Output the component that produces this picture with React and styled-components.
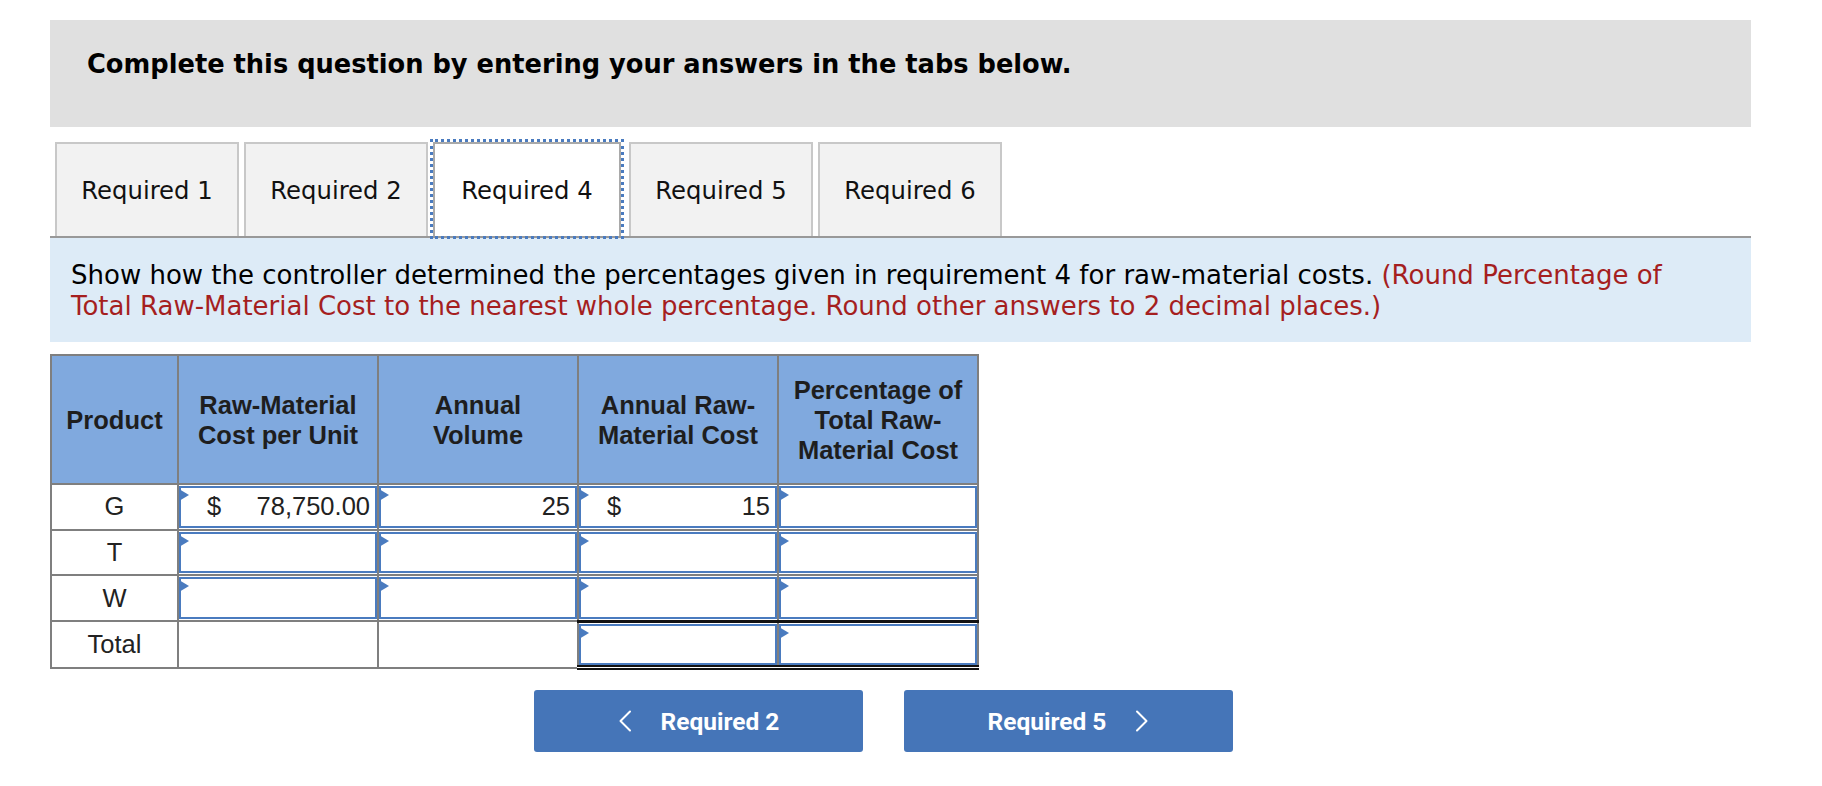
import React from "react";
import styled, { createGlobalStyle } from "styled-components";

const GlobalStyle = createGlobalStyle`
  html, body {
    margin: 0;
    padding: 0;
    background: #fff;
  }
  body {
    font-family: "DejaVu Sans", Verdana, sans-serif;
  }
`;

const Page = styled.div`
  width: 1701px;
  padding: 20px 0 0 50px;
`;

const Banner = styled.div`
  height: 107px;
  box-sizing: border-box;
  background: #e0e0e0;
  padding: 29px 0 0 37px;
  font-size: 25.7px;
  font-weight: bold;
  color: #000;
`;

const TabBar = styled.div`
  display: flex;
  gap: 5px;
  margin-top: 15px;
  padding-left: 5px;
  border-bottom: 2px solid #999;
`;

const Tab = styled.div`
  width: ${(p) => (p.$active ? 188 : 184)}px;
  height: 94px;
  box-sizing: border-box;
  display: flex;
  align-items: center;
  justify-content: center;
  background: ${(p) => (p.$active ? "#fff" : "#f2f2f2")};
  border: 2px solid ${(p) => (p.$active ? "#a9a9a9" : "#c8c8c8")};
  border-bottom: none;
  margin-right: ${(p) => (p.$active ? 3 : 0)}px;
  outline: ${(p) => (p.$active ? "3px dotted #4a7bbf" : "none")};
  font-size: 24.3px;
  color: #111;
`;

const Prompt = styled.div`
  height: 104px;
  box-sizing: border-box;
  background: #ddebf7;
  padding: 22px 60px 0 21px;
  font-size: 26px;
  line-height: 31px;
  color: #000;
`;

const Hint = styled.span`
  color: #a51f1f;
`;

const Grid = styled.table`
  border-collapse: collapse;
  table-layout: fixed;
  width: 927px;
  margin-top: 12px;
  font-family: "Liberation Sans", Arial, sans-serif;
  font-size: 25.5px;
  color: #222;
`;

const HeadCell = styled.th`
  box-sizing: border-box;
  width: ${(p) => p.$w}px;
  height: 129px;
  padding: 0 10px;
  background: #80a9de;
  border: 2px solid #7f7f7f;
  font-weight: bold;
  line-height: 30px;
  color: #1e1e1e;
`;

const Cell = styled.td`
  height: 41px;
  padding: 1px 0;
  border: 2px solid #7f7f7f;
  text-align: center;
  vertical-align: middle;
`;

const TotalCell = styled.td`
  height: 41px;
  padding: 1px 0 0;
  border: 2px solid #7f7f7f;
  border-top: 3px solid #111;
  border-bottom: 5px double #111;
  vertical-align: bottom;
`;

const Entry = styled.div`
  position: relative;
  height: 41.5px;
  box-sizing: border-box;
  border: 2px solid #4a7bbf;
  display: flex;
  align-items: center;
  justify-content: ${(p) => (p.$dollar ? "space-between" : "flex-end")};
  padding: 0 5px 0 26px;
  background: #fff;

  &::before {
    content: "";
    position: absolute;
    left: -2px;
    top: 1px;
    border-left: 10px solid #4a7bbf;
    border-top: 6px solid transparent;
    border-bottom: 6px solid transparent;
  }
`;

const NavRow = styled.div`
  display: flex;
  gap: 41px;
  margin-top: 20px;
  padding-left: 484px;
`;

const NavButton = styled.button`
  width: 329px;
  height: 62px;
  border: none;
  border-radius: 3px;
  background: #4575b8;
  color: #fff;
  font-family: Roboto, "Liberation Sans", sans-serif;
  font-weight: bold;
  font-size: 24.5px;
  display: flex;
  align-items: center;
  justify-content: center;
  gap: 29px;
  cursor: pointer;
`;

const Chevron = ({ dir }) => (
  <svg width="14" height="22" viewBox="0 0 14 22">
    <polyline
      points={dir === "left" ? "12,1.5 2.5,11 12,20.5" : "2,1.5 11.5,11 2,20.5"}
      fill="none"
      stroke="#fff"
      strokeWidth="2"
      strokeLinecap="round"
      strokeLinejoin="round"
    />
  </svg>
);

const tabs = ["Required 1", "Required 2", "Required 4", "Required 5", "Required 6"];

const columns = [
  { w: 127, label: "Product" },
  { w: 200, label: "Raw-Material Cost per Unit" },
  { w: 200, label: "Annual Volume" },
  { w: 200, label: "Annual Raw-Material Cost" },
  { w: 200, label: "Percentage of Total Raw-Material Cost" },
];

const rows = [
  { product: "G", cost: "78,750.00", volume: "25", annual: "15" },
  { product: "T" },
  { product: "W" },
];

function App() {
  return (
    <Page>
      <GlobalStyle />
      <Banner>Complete this question by entering your answers in the tabs below.</Banner>

      <TabBar>
        {tabs.map((t) => (
          <Tab key={t} $active={t === "Required 4"}>
            {t}
          </Tab>
        ))}
      </TabBar>

      <Prompt>
        Show how the controller determined the percentages given in requirement 4 for
        raw-material costs.{" "}
        <Hint>
          (Round Percentage of Total Raw-Material Cost to the nearest whole percentage. Round
          other answers to 2 decimal places.)
        </Hint>
      </Prompt>

      <Grid>
        <thead>
          <tr>
            {columns.map((c) => (
              <HeadCell key={c.label} $w={c.w}>
                {c.label}
              </HeadCell>
            ))}
          </tr>
        </thead>
        <tbody>
          {rows.map((r) => (
            <tr key={r.product}>
              <Cell>{r.product}</Cell>
              <Cell>
                <Entry $dollar={!!r.cost}>
                  {r.cost && <span>$</span>}
                  {r.cost && <span>{r.cost}</span>}
                </Entry>
              </Cell>
              <Cell>
                <Entry>{r.volume}</Entry>
              </Cell>
              <Cell>
                <Entry $dollar={!!r.annual}>
                  {r.annual && <span>$</span>}
                  {r.annual && <span>{r.annual}</span>}
                </Entry>
              </Cell>
              <Cell>
                <Entry />
              </Cell>
            </tr>
          ))}
          <tr>
            <Cell>Total</Cell>
            <Cell />
            <Cell />
            <TotalCell>
              <Entry />
            </TotalCell>
            <TotalCell>
              <Entry />
            </TotalCell>
          </tr>
        </tbody>
      </Grid>

      <NavRow>
        <NavButton>
          <Chevron dir="left" />
          <span>Required 2</span>
        </NavButton>
        <NavButton>
          <span>Required 5</span>
          <Chevron dir="right" />
        </NavButton>
      </NavRow>
    </Page>
  );
}

export default App;
